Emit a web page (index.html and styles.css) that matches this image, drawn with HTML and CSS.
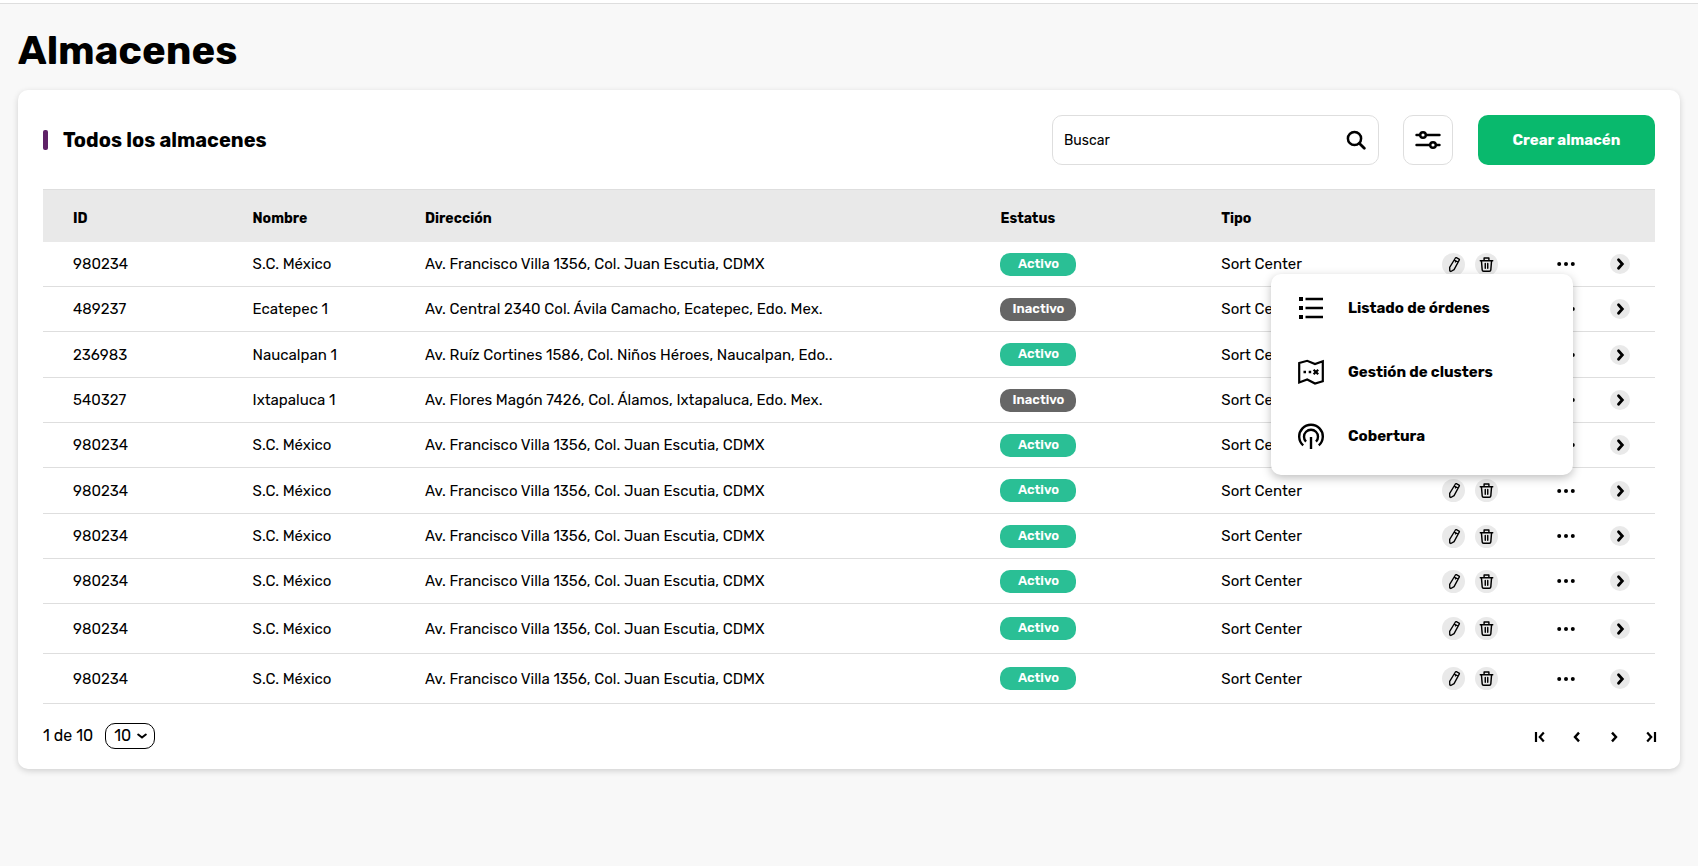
FILE: index.html
```html
<!DOCTYPE html>
<html lang="es">
<head>
  <meta charset="UTF-8" />
  <meta name="viewport" content="width=device-width, initial-scale=1.0" />
  <title>Almacenes</title>
  <link rel="stylesheet" href="styles.css">
</head>
<body>

  <!-- iconos -->
  <svg class="sprite" aria-hidden="true">
    <symbol id="i-search" viewBox="0 0 20 20">
      <circle cx="8.5" cy="8.5" r="6.6" fill="none" stroke="currentColor" stroke-width="2.5"/>
      <path d="M13.5 13.5 18.3 18.3" stroke="currentColor" stroke-width="2.8" stroke-linecap="round"/>
    </symbol>
    <symbol id="i-filter" viewBox="0 0 26 20">
      <g fill="none" stroke="currentColor" stroke-width="2.4" stroke-linecap="round">
        <path d="M1.5 5H5M11 5H24.5M1.5 15H15M21 15H24.5"/>
        <circle cx="8" cy="5" r="2.8"/>
        <circle cx="18" cy="15" r="2.8"/>
      </g>
    </symbol>
    <symbol id="i-edit" viewBox="0 0 24 24">
      <path d="M14 5.2Q14.4 4.6 15 4.9L17.8 6.3Q18.4 6.6 18.1 7.2L12.6 17.3 9.2 19.3 8.1 18.7 8 14.9ZM12.8 7.3 16.7 9.4M14.5 8.2 13.8 9.8" fill="none" stroke="currentColor" stroke-width="1.4" stroke-linejoin="round"/>
    </symbol>
    <symbol id="i-trash" viewBox="0 0 24 24">
      <path d="M5.5 8H18.5M9.5 8V5.2H14.5V8M6.7 8 7.5 17.6Q7.6 19 9 19H15Q16.4 19 16.5 17.6L17.3 8M10.7 11V16M13.3 11V16" fill="none" stroke="currentColor" stroke-width="1.5" stroke-linecap="round" stroke-linejoin="round"/>
    </symbol>
    <symbol id="i-more" viewBox="0 0 18 6">
      <circle cx="2.2" cy="3" r="2"/><circle cx="9" cy="3" r="2"/><circle cx="15.8" cy="3" r="2"/>
    </symbol>
    <symbol id="i-go" viewBox="0 0 20 20">
      <path d="M8.5 5.8 12.3 10 8.5 14.2" fill="none" stroke="currentColor" stroke-width="2.8" stroke-linecap="round"/>
    </symbol>
    <symbol id="i-list" viewBox="0 0 26 26">
      <path d="M1 2H5V6H1ZM1 11H5V15H1ZM1 20H5V24H1ZM7.5 2.7H25V5.3H7.5ZM7.5 11.7H25V14.3H7.5ZM7.5 20.7H25V23.3H7.5Z"/>
    </symbol>
    <symbol id="i-map" viewBox="0 0 26 26">
      <g fill="none" stroke="currentColor" stroke-width="2.2">
        <path d="M1.2 4 9.2 1.8 17 5 24.8 2.2V22.2L17 24.5 9.2 20.5 1.2 23.5Z"/>
        <path d="M5.5 13H8M10.7 13H13.2" stroke-width="2.6"/>
        <path d="M15.6 10.8 20.2 15.2M20.2 10.8 15.6 15.2"/>
      </g>
    </symbol>
    <symbol id="i-signal" viewBox="0 0 26 26">
      <g fill="none" stroke="currentColor" stroke-width="2.4">
        <path d="M5.2 22.4A11.8 11.8 0 1 1 20.8 22.4"/>
        <path d="M8 18.6A7 7 0 1 1 18 18.6"/>
        <path d="M13 14V26"/>
      </g>
    </symbol>
    <symbol id="i-down" viewBox="0 0 10 6">
      <path d="M1.2 1.5 5 4.5 8.8 1.5" fill="none" stroke="currentColor" stroke-width="2" stroke-linecap="round"/>
    </symbol>
    <symbol id="i-first" viewBox="0 0 12 12">
      <path d="M2 1V11M9.8 1.6 5.8 6 9.8 10.4" fill="none" stroke="currentColor" stroke-width="2.2"/>
    </symbol>
    <symbol id="i-prev" viewBox="0 0 12 12">
      <path d="M8 1.6 4 6 8 10.4" fill="none" stroke="currentColor" stroke-width="2.4"/>
    </symbol>
    <symbol id="i-next" viewBox="0 0 12 12">
      <path d="M4 1.6 8 6 4 10.4" fill="none" stroke="currentColor" stroke-width="2.4"/>
    </symbol>
    <symbol id="i-last" viewBox="0 0 12 12">
      <path d="M2.2 1.6 6.2 6 2.2 10.4M10 1V11" fill="none" stroke="currentColor" stroke-width="2.2"/>
    </symbol>
  </svg>

  <main class="page">
    <h1>Almacenes</h1>

    <section class="card">
      <div class="toolbar">
        <h2>Todos los almacenes</h2>
        <div class="search">
          <input type="text" placeholder="Buscar" aria-label="Buscar">
          <button type="button" aria-label="Buscar almacén"><svg width="20" height="20"><use href="#i-search"/></svg></button>
        </div>
        <button type="button" class="filter" aria-label="Filtros"><svg width="26" height="20"><use href="#i-filter"/></svg></button>
        <button type="button" class="create">Crear almacén</button>
      </div>

      <table>
        <thead>
          <tr>
            <th class="col-id">ID</th>
            <th class="col-name">Nombre</th>
            <th class="col-address">Dirección</th>
            <th class="col-status">Estatus</th>
            <th class="col-type">Tipo</th>
            <th aria-label="Acciones"></th>
          </tr>
        </thead>
        <tbody id="rows"></tbody>
      </table>

      <div class="pagination">
        <label for="size">1 de 10</label>
        <div class="size">
          <select id="size">
            <option>10</option>
            <option>20</option>
            <option>50</option>
          </select>
          <svg width="10" height="6"><use href="#i-down"/></svg>
        </div>
        <nav class="pager" aria-label="Paginación">
          <button type="button" aria-label="Primera"><svg width="12" height="12"><use href="#i-first"/></svg></button>
          <button type="button" aria-label="Anterior"><svg width="12" height="12"><use href="#i-prev"/></svg></button>
          <button type="button" aria-label="Siguiente"><svg width="12" height="12"><use href="#i-next"/></svg></button>
          <button type="button" aria-label="Última"><svg width="12" height="12"><use href="#i-last"/></svg></button>
        </nav>
      </div>
    </section>
  </main>

  <template id="menu">
    <div class="menu">
      <a href="#ordenes"><svg width="26" height="26"><use href="#i-list"/></svg>Listado de órdenes</a>
      <a href="#clusters"><svg width="26" height="26"><use href="#i-map"/></svg>Gestión de clusters</a>
      <a href="#cobertura"><svg width="26" height="26"><use href="#i-signal"/></svg>Cobertura</a>
    </div>
  </template>

  <script>
    const mexico = ["980234", "S.C. México", "Av. Francisco Villa 1356, Col. Juan Escutia, CDMX", "Activo"];
    const almacenes = [
      mexico,
      ["489237", "Ecatepec 1", "Av. Central 2340 Col. Ávila Camacho, Ecatepec, Edo. Mex.", "Inactivo"],
      ["236983", "Naucalpan 1", "Av. Ruíz Cortines 1586, Col. Niños Héroes, Naucalpan, Edo..", "Activo"],
      ["540327", "Ixtapaluca 1", "Av. Flores Magón 7426, Col. Álamos, Ixtapaluca, Edo. Mex.", "Inactivo"],
      mexico, mexico, mexico, mexico, mexico, mexico
    ];

    const rows = document.getElementById("rows");
    rows.innerHTML = almacenes.map(([id, nombre, direccion, estatus]) => `
      <tr>
        <td>${id}</td>
        <td>${nombre}</td>
        <td>${direccion}</td>
        <td><span class="badge ${estatus.toLowerCase()}">${estatus}</span></td>
        <td>Sort Center</td>
        <td>
          <div class="actions">
            <button type="button" class="round" aria-label="Editar"><svg width="23" height="23"><use href="#i-edit"/></svg></button>
            <button type="button" class="round" aria-label="Eliminar"><svg width="23" height="23"><use href="#i-trash"/></svg></button>
            <div class="more">
              <button type="button" aria-label="Más opciones"><svg width="18" height="6"><use href="#i-more"/></svg></button>
            </div>
            <button type="button" class="round go" aria-label="Ver detalle"><svg width="20" height="20"><use href="#i-go"/></svg></button>
          </div>
        </td>
      </tr>`).join("");

    // menú de opciones: abierto en la primera fila
    const menu = document.getElementById("menu").content.firstElementChild;
    rows.querySelector(".more").appendChild(menu);
    rows.addEventListener("click", (e) => {
      const more = e.target.closest(".more");
      if (!more || e.target.closest(".menu")) return;
      if (more.contains(menu)) menu.remove();
      else more.appendChild(menu);
    });
  </script>
</body>
</html>
```
FILE: styles.css
```css
:root {
  --bg: #f8f8f8;
  --line: #dedede;
  --head: #e9e9e9;
  --purple: #5f2167;
  --green: #09b96d;
  --active: #2abf95;
  --inactive: #666666;
}
* { box-sizing: border-box; }
body {
  margin: 0;
  font-family: Rubik, Roboto, sans-serif;
  font-size: 15px;
  background: var(--bg);
  color: #000;
  border-top: 3px solid #fff;
}
button, input, select {
  font-family: inherit;
  color: inherit;
}
button {
  display: flex;
  align-items: center;
  justify-content: center;
  padding: 0;
  border: 0;
  background: none;
  cursor: pointer;
}
svg {
  display: block;
  fill: currentColor;
}
.sprite {
  position: absolute;
  width: 0;
  height: 0;
}
.page {
  padding: 23px 18px;
  border-top: 1px solid var(--line);
}
h1 {
  margin: 0 0 15px;
  font-size: 40px;
  line-height: 48px;
}
.card {
  padding: 25px 25px 20px;
  background: #fff;
  border-radius: 10px;
  box-shadow: 0 2px 6px rgba(0,0,0,0.16);
}
.toolbar {
  display: flex;
  align-items: center;
  margin-bottom: 24px;
}
h2 {
  display: flex;
  align-items: center;
  gap: 15px;
  margin: 0 auto 0 0;
  font-size: 20px;
}
h2::before {
  content: "";
  width: 5px;
  height: 20px;
  border-radius: 2px;
  background: var(--purple);
}
.search {
  display: flex;
  width: 327px;
  height: 50px;
  border: 1px solid var(--line);
  border-radius: 10px;
}
.search input {
  flex: 1;
  min-width: 0;
  padding: 0 11px;
  border: 0;
  outline: 0;
  background: none;
  font-size: 14px;
}
.search input::placeholder { color: #000; }
.search button { width: 44px; }
.filter {
  width: 50px;
  height: 50px;
  margin: 0 25px 0 24px;
  border: 1px solid var(--line);
  border-radius: 10px;
}
.create {
  width: 177px;
  height: 50px;
  border-radius: 10px;
  background: var(--green);
  color: #fff;
  font-size: 15px;
  font-weight: bold;
}
table {
  width: 100%;
  border-collapse: separate;
  border-spacing: 0;
  table-layout: fixed;
}
th, td {
  padding: 0;
  text-align: left;
  white-space: nowrap;
}
th {
  height: 53px;
  padding-top: 4px;
  background: var(--head);
  border-top: 1px solid var(--line);
  font-size: 14px;
}
td {
  height: 45px;
  border-bottom: 1px solid var(--line);
}
tr:nth-child(3n) td { height: 46px; }
tr:nth-child(n+9) td { height: 50px; }
th:first-child, td:first-child { padding-left: 30px; }
.col-id { width: 13%; }
.col-name { width: 10.7%; }
.col-address { width: 35.7%; }
.col-status { width: 13.7%; }
.col-type { width: 13.7%; }
.badge {
  display: block;
  width: 76px;
  padding-bottom: 1px;
  border-radius: 10px;
  color: #fff;
  font-size: 13px;
  font-weight: 600;
  line-height: 22px;
  text-align: center;
}
.badge.activo { background: var(--active); }
.badge.inactivo { background: var(--inactive); }
.actions {
  display: flex;
  align-items: center;
  gap: 10px;
  padding-right: 25px;
}
.round {
  width: 23px;
  height: 23px;
  border-radius: 50%;
  background: var(--head);
}
.round.go {
  width: 20px;
  height: 20px;
  margin-left: 20px;
}
.more {
  position: relative;
  margin-left: auto;
}
.more button {
  width: 28px;
  height: 20px;
}
.menu {
  position: absolute;
  top: 20px;
  right: 7px;
  z-index: 1;
  width: 302px;
  padding: 2px 0 7px;
  background: #fff;
  border-radius: 10px;
  box-shadow: 0 3px 10px rgba(0,0,0,0.25);
}
.menu a {
  display: flex;
  align-items: center;
  gap: 24px;
  height: 64px;
  padding-left: 27px;
  color: inherit;
  font-size: 15px;
  font-weight: bold;
  text-decoration: none;
}
.pagination {
  display: flex;
  align-items: center;
  margin-top: 18px;
}
.pagination label { font-size: 16px; }
.size {
  position: relative;
  margin-left: 12px;
}
.size select {
  display: block;
  width: 50px;
  height: 26px;
  padding: 0 8px;
  appearance: none;
  border: 1px solid #000;
  border-radius: 10px;
  background: #fff;
  font-size: 16px;
}
.size svg {
  position: absolute;
  top: 10px;
  right: 8px;
  pointer-events: none;
}
.pager {
  display: flex;
  gap: 13px;
  margin: 3px -8px 0 auto;
}
.pager button {
  width: 24px;
  height: 24px;
}
```
